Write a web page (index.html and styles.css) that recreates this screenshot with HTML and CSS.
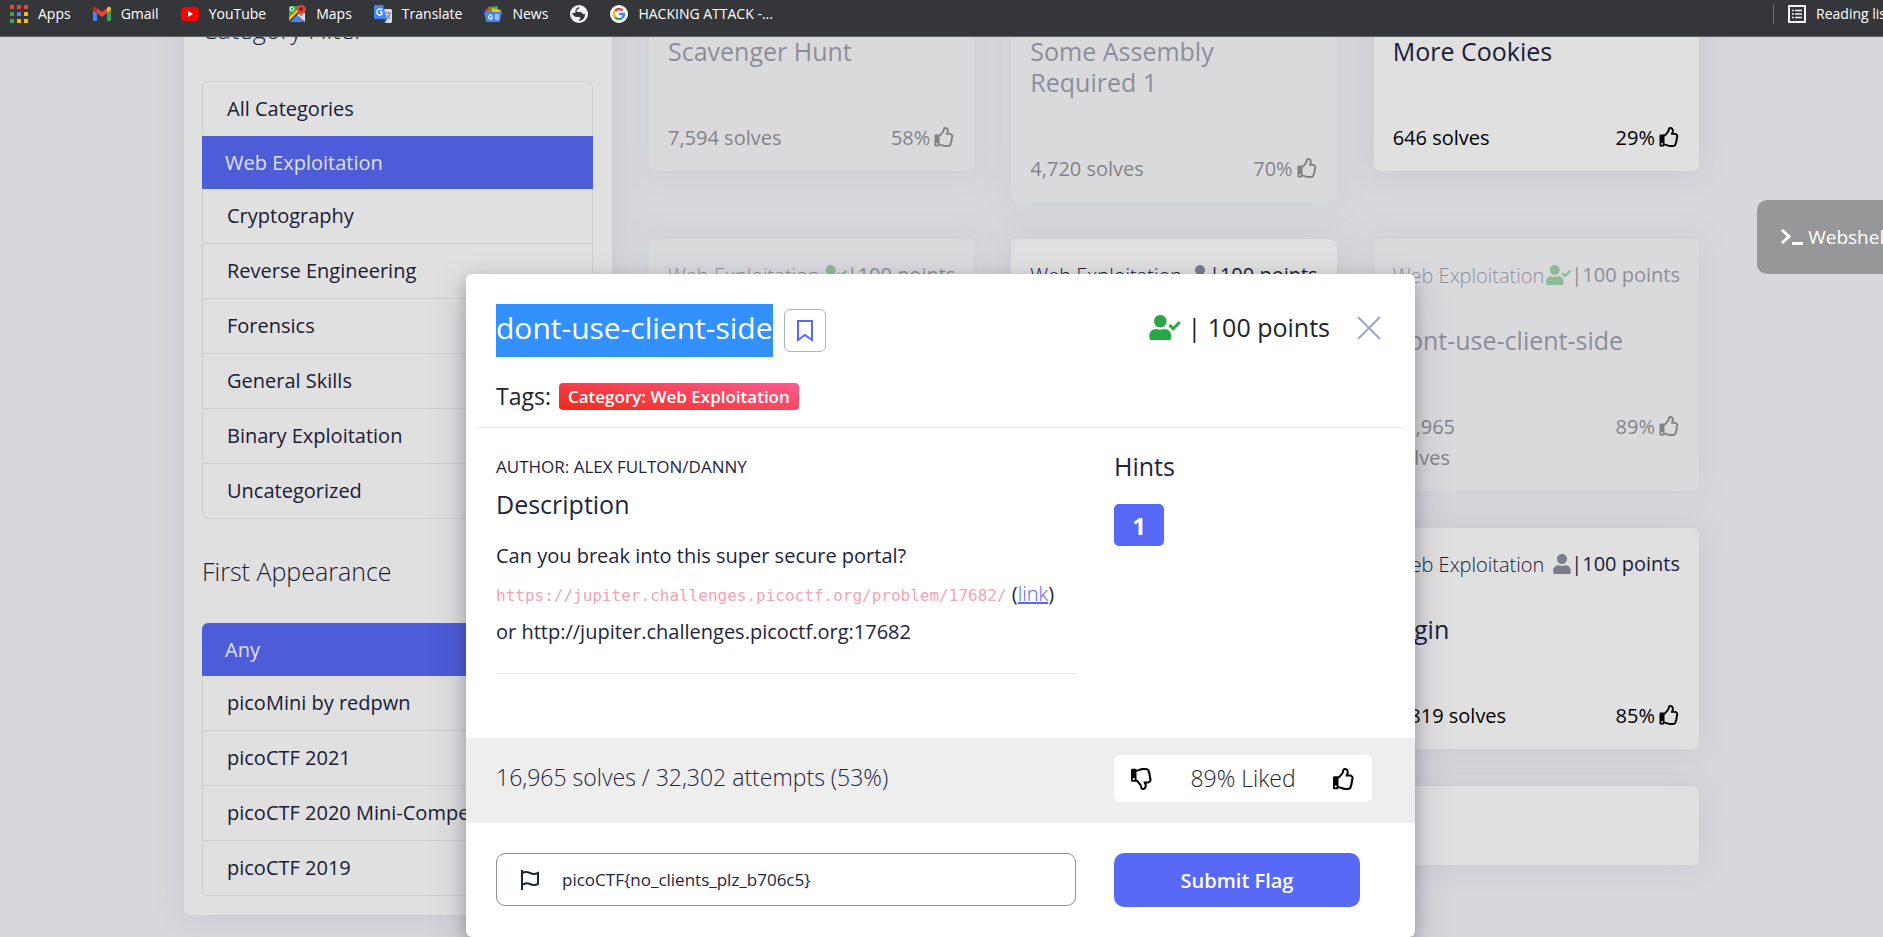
FILE: index.html
```html
<!DOCTYPE html>
<html lang="en">
<head>
<meta charset="utf-8">
<title>picoCTF - Practice</title>
<link rel="stylesheet" href="styles.css">
</head>
<body>
<svg class="sprite" aria-hidden="true">
  <symbol id="thumb" viewBox="0 0 512 512"><path d="M466.27 286.69C475.04 271.84 480 256 480 236.85c0-44.015-37.218-85.58-85.82-85.58H357.7c4.92-12.81 8.85-28.13 8.85-46.54C366.55 31.936 328.86 0 271.28 0c-61.607 0-58.093 94.933-71.76 108.6-22.747 22.747-49.615 66.447-68.76 83.4H32c-17.673 0-32 14.327-32 32v240c0 17.673 14.327 32 32 32h64c14.893 0 27.408-10.174 30.978-23.95 44.509 1.001 75.06 39.94 177.802 39.94 7.22 0 15.22.01 22.22.01 77.117 0 111.986-39.423 112.94-95.33 13.319-18.425 20.299-43.122 17.34-66.99 9.854-18.452 13.664-40.343 8.99-62.99zm-61.75 53.83c12.56 21.13 1.26 49.41-13.94 57.57 7.7 48.78-17.608 65.9-53.12 65.9h-37.82c-71.639 0-118.029-37.82-171.64-37.82V240h10.92c28.36 0 67.98-70.89 94.54-97.46 28.36-28.36 18.91-75.63 37.82-94.54 47.27 0 47.27 32.98 47.27 56.73 0 39.17-28.36 56.72-28.36 94.54h103.99c21.11 0 37.73 18.91 37.82 37.82.09 18.9-12.82 37.81-22.27 37.81 13.489 14.555 16.371 45.236-5.21 65.62zM88 432c0 13.255-10.745 24-24 24s-24-10.745-24-24 10.745-24 24-24 24 10.745 24 24z"/></symbol>
  <symbol id="thumb-down" viewBox="0 0 512 512"><path transform="matrix(1 0 0 -1 0 512)" d="M466.27 286.69C475.04 271.84 480 256 480 236.85c0-44.015-37.218-85.58-85.82-85.58H357.7c4.92-12.81 8.85-28.13 8.85-46.54C366.55 31.936 328.86 0 271.28 0c-61.607 0-58.093 94.933-71.76 108.6-22.747 22.747-49.615 66.447-68.76 83.4H32c-17.673 0-32 14.327-32 32v240c0 17.673 14.327 32 32 32h64c14.893 0 27.408-10.174 30.978-23.95 44.509 1.001 75.06 39.94 177.802 39.94 7.22 0 15.22.01 22.22.01 77.117 0 111.986-39.423 112.94-95.33 13.319-18.425 20.299-43.122 17.34-66.99 9.854-18.452 13.664-40.343 8.99-62.99zm-61.75 53.83c12.56 21.13 1.26 49.41-13.94 57.57 7.7 48.78-17.608 65.9-53.12 65.9h-37.82c-71.639 0-118.029-37.82-171.64-37.82V240h10.92c28.36 0 67.98-70.89 94.54-97.46 28.36-28.36 18.91-75.63 37.82-94.54 47.27 0 47.27 32.98 47.27 56.73 0 39.17-28.36 56.72-28.36 94.54h103.99c21.11 0 37.73 18.91 37.82 37.82.09 18.9-12.82 37.81-22.27 37.81 13.489 14.555 16.371 45.236-5.21 65.62zM88 256c0 13.255-10.745 24-24 24s-24-10.745-24-24 10.745-24 24-24 24 10.745 24 24z"/></symbol>
  <symbol id="user" viewBox="0 0 448 512"><path d="M224 256c70.7 0 128-57.3 128-128S294.7 0 224 0 96 57.3 96 128s57.3 128 128 128zm89.6 32h-16.7c-22.2 10.2-46.9 16-72.9 16s-50.6-5.8-72.9-16h-16.7C60.2 288 0 348.2 0 422.4V464c0 26.5 21.5 48 48 48h352c26.5 0 48-21.5 48-48v-41.6c0-74.2-60.2-134.4-134.4-134.4z"/></symbol>
  <symbol id="user-check" viewBox="0 0 640 512"><path d="M224 256c70.7 0 128-57.3 128-128S294.7 0 224 0 96 57.3 96 128s57.3 128 128 128zm89.6 32h-16.7c-22.2 10.2-46.9 16-72.9 16s-50.6-5.8-72.9-16h-16.7C60.2 288 0 348.2 0 422.4V464c0 26.5 21.5 48 48 48h352c26.5 0 48-21.5 48-48v-41.6c0-74.2-60.2-134.4-134.4-134.4zm323-128.4l-27.8-28.1c-4.6-4.7-12.1-4.7-16.8-.1l-104.8 104-45.5-45.8c-4.6-4.7-12.1-4.7-16.8-.1l-28.1 27.9c-4.7 4.6-4.7 12.1-.1 16.8l81.7 82.3c4.6 4.7 12.1 4.7 16.8.1l141.3-140.2c4.6-4.7 4.7-12.2.1-16.8z"/></symbol>
</svg>

<header class="bookmarks">
  <a class="bookmark" href="#"><svg viewBox="0 0 18 18"><path fill="#ea4335" d="M0 0h4v4H0zM7 0h4v4H7zM14 0h4v4h-4z"/><path fill="#34a853" d="M0 7h4v4H0z"/><path fill="#4285f4" d="M7 7h4v4H7z"/><path fill="#fbbc04" d="M14 7h4v4h-4zM7 14h4v4H7zM14 14h4v4h-4z"/><path fill="#34a853" d="M0 14h4v4H0z"/></svg>Apps</a>
  <a class="bookmark" href="#"><svg viewBox="0 0 18 18"><path fill="#4285f4" d="M0 5l4 3v8H1q-1 0-1-1z"/><path fill="#34a853" d="M14 8l4-3v10q0 1-1 1h-3z"/><path fill="#ea4335" d="M4 3l5 4 5-4v5l-5 4-5-4z"/><path fill="#c5221f" d="M0 4q0-3 3-2l1 1v5L0 5z"/><path fill="#fbbc04" d="M18 4q0-3-3-2l-1 1v5l4-3z"/></svg>Gmail</a>
  <a class="bookmark" href="#"><svg viewBox="0 0 18 18"><rect y="2" width="18" height="14" rx="4" fill="#f00"/><path fill="#fff" d="M7 6l5 3-5 3z"/></svg>YouTube</a>
  <a class="bookmark" href="#"><svg viewBox="0 0 18 18"><path fill="#34a853" d="M1 1h10L1 12z"/><path fill="#fbbc04" d="M1 12L12 1l2 2L1 16z"/><path fill="#4285f4" d="M2 17l7-7 7 7z"/><path fill="#dadce0" d="M9 10l5-4 3 2v9z"/><path fill="#ea4335" d="M13 0c3 0 5 2 5 4 0 3-4 4-5 8-1-4-4-5-4-8 0-2 1-4 4-4z"/><circle cx="13" cy="4" r="2" fill="#8c1d18"/><circle cx="4" cy="4" r="2" fill="none" stroke="#fff"/></svg>Maps</a>
  <a class="bookmark" href="#"><svg viewBox="0 0 18 18"><path fill="#dadce0" d="M8 4h9l1 1v12l-1 1h-6z"/><path fill="#4285f4" d="M1 0h8l4 14H1l-1-1V1z"/><path fill="#1a56c4" d="M9 14h4l-2 4z"/><path fill="none" stroke="#fff" stroke-width="1.3" d="M8 5a3 3 0 1 0 0 4V7H6"/><path fill="none" stroke="#607d8b" d="M12 8h5M14 7v1m2 0q-1 4-3 6m0-4l3 4"/></svg>Translate</a>
  <a class="bookmark" href="#"><svg viewBox="0 0 18 18"><path fill="#34a853" d="M4 2l10-1v6H4z"/><path fill="#ea4335" d="M1 5l4-2v5H2z"/><path fill="#fbbc04" d="M8 3l9 2-1 4H8z"/><path fill="#4285f4" d="M0 7h18l-2 9q0 1-1 1H3q-1 0-1-1z"/><path fill="none" stroke="#fff" stroke-width="1.2" d="M8 10.500a2 2 0 1 0 0 3V12H7M11 10h4m-4 2h4m-4 2h4"/></svg>News</a>
  <a class="bookmark" href="#" aria-label="Website"><svg viewBox="0 0 18 18"><circle cx="9" cy="9" r="9" fill="#f1f3f4"/><path fill="#35363a" d="M9 2c1 1 0 2-1 2-1 1-2 1-1 3h3c2 0 2 1 3 2l2 0c0 4-2 6-6 7 0-2 2-2 1-4H7C4 12 3 10 2 8h3c1-1 0-3 1-4 1-1 2-2 3-2z"/></svg></a>
  <a class="bookmark" href="#"><svg viewBox="0 0 18 18"><circle cx="9" cy="9" r="9" fill="#fff"/><g fill="none" stroke-width="2.500"><path stroke="#ea4335" d="M5 6a5 5 0 0 1 7.500-.500"/><path stroke="#fbbc04" d="M5 6a5 5 0 0 0 0 6"/><path stroke="#34a853" d="M5 12a5 5 0 0 0 7 1"/><path stroke="#4285f4" d="M12 13a5 5 0 0 0 2-4H9"/></g></svg>HACKING ATTACK -...</a>
  <a class="bookmark reading" href="#"><svg viewBox="0 0 18 18"><path fill="none" stroke="#f1f3f4" stroke-width="2" d="M1 1h16v16H1z"/><path stroke="#f1f3f4" stroke-width="1.500" d="M4 5.500h2m1 0h7M4 9h2m1 0h7M4 12.500h2m1 0h7"/></svg>Reading list</a>
</header>

<main class="viewport">
  <div class="page">
    <aside class="sidebar">
      <h2 class="filter-title">Category Filter</h2>
      <nav class="filter-list">
        <a href="#">All Categories</a>
        <a href="#" class="active">Web Exploitation</a>
        <a href="#">Cryptography</a>
        <a href="#">Reverse Engineering</a>
        <a href="#">Forensics</a>
        <a href="#">General Skills</a>
        <a href="#">Binary Exploitation</a>
        <a href="#">Uncategorized</a>
      </nav>
      <h2 class="filter-title">First Appearance</h2>
      <nav class="filter-list">
        <a href="#" class="active">Any</a>
        <a href="#">picoMini by redpwn</a>
        <a href="#">picoCTF 2021</a>
        <a href="#">picoCTF 2020 Mini-Competition</a>
        <a href="#">picoCTF 2019</a>
      </nav>
    </aside>

    <section class="cards">
      <article class="card solved">
        <div class="card-head"><span class="category">Web Exploitation</span><svg class="who-check"><use href="#user-check"/></svg><span>|100 points</span></div>
        <h3>Scavenger Hunt</h3>
        <div class="card-foot"><span>7,594 solves</span><span class="rating">58%<svg><use href="#thumb"/></svg></span></div>
      </article>
      <article class="card solved">
        <div class="card-head"><span class="category">Web Exploitation</span><svg class="who-check"><use href="#user-check"/></svg><span>|100 points</span></div>
        <h3>Some Assembly Required 1</h3>
        <div class="card-foot"><span>4,720 solves</span><span class="rating">70%<svg><use href="#thumb"/></svg></span></div>
      </article>
      <article class="card">
        <div class="card-head"><span class="category">Web Exploitation</span><svg class="who"><use href="#user"/></svg><span>|100 points</span></div>
        <h3>More Cookies</h3>
        <div class="card-foot"><span>646 solves</span><span class="rating">29%<svg><use href="#thumb"/></svg></span></div>
      </article>
      <article class="card solved">
        <div class="card-head"><span class="category">Web Exploitation</span><svg class="who-check"><use href="#user-check"/></svg><span>|100 points</span></div>
      </article>
      <article class="card">
        <div class="card-head"><span class="category">Web Exploitation</span><svg class="who"><use href="#user"/></svg><span>|100 points</span></div>
      </article>
      <article class="card solved">
        <div class="card-head"><span class="category">Web Exploitation</span><svg class="who-check"><use href="#user-check"/></svg><span>|100 points</span></div>
        <h3>dont-use-client-side</h3>
        <div class="card-foot"><span>16,965<br>solves</span><span class="rating">89%<svg><use href="#thumb"/></svg></span></div>
      </article>
      <article class="card last-column">
        <div class="card-head"><span class="category">Web Exploitation</span><svg class="who"><use href="#user"/></svg><span>|100 points</span></div>
        <h3>login</h3>
        <div class="card-foot"><span>4,819 solves</span><span class="rating">85%<svg><use href="#thumb"/></svg></span></div>
      </article>
      <article class="card pager"></article>
    </section>
  </div>

  <div class="overlay">
    <section class="modal" role="dialog" aria-labelledby="challenge-name">
      <div class="modal-head">
        <h1 id="challenge-name"><span class="selected">dont-use-client-side</span></h1>
        <button class="bookmark-button" aria-label="Bookmark"><svg viewBox="0 0 18 24"><path d="M2 2h14v19l-7-5-7 5z"/></svg></button>
        <div class="points"><svg><use href="#user-check"/></svg><span>| 100 points</span></div>
        <button class="close-button" aria-label="Close"><svg viewBox="0 0 24 24"><path d="M1 1l22 22M23 1L1 23"/></svg></button>
      </div>
      <div class="tags"><span>Tags:</span><span class="tag">Category: Web Exploitation</span></div>
      <div class="modal-body">
        <div class="description">
          <p class="author">AUTHOR: ALEX FULTON/DANNY</p>
          <h2>Description</h2>
          <p>Can you break into this super secure portal?<br><code>https://jupiter.challenges.picoctf.org/problem/17682/</code> (<a href="#">link</a>)<br>or http://jupiter.challenges.picoctf.org:17682</p>
        </div>
        <div class="hints">
          <h2>Hints</h2>
          <button class="hint-button">1</button>
        </div>
      </div>
      <div class="stats">
        <span class="attempts">16,965 solves / 32,302 attempts (53%)</span>
        <div class="liked">
          <button aria-label="Dislike"><svg><use href="#thumb-down"/></svg></button>
          <span>89% Liked</span>
          <button aria-label="Like"><svg><use href="#thumb"/></svg></button>
        </div>
      </div>
      <form class="submit-row">
        <label class="flag-field">
          <svg viewBox="0 0 20 20"><path d="M2 0v20M2 3q4-2 8 0t8 0v11q-4 2-8 0t-8 1"/></svg>
          <input type="text" aria-label="Flag" value="picoCTF{no_clients_plz_b706c5}">
        </label>
        <button class="submit-button" type="button">Submit Flag</button>
      </form>
    </section>
  </div>

  <button class="webshell"><svg viewBox="0 0 24 18"><path d="M2 2l7 6.500L2 15M12 15.500h11"/></svg>Webshell</button>
</main>
</body>
</html>
```

FILE: styles.css
```css
* { box-sizing: border-box; }

body {
  margin: 0;
  height: 100vh;
  display: flex;
  flex-direction: column;
  overflow: hidden;
  background: #f5f6fa;
  color: #1d2440;
  font-family: "Open Sans", "Noto Sans", sans-serif;
  font-size: 20px;
  line-height: 31px;
}

h1, h2, h3, p { margin: 0; font-weight: 400; }
button, input { font: inherit; color: inherit; }
button { padding: 0; border: 0; background: none; cursor: pointer; }
svg { flex: none; fill: currentColor; }
.sprite { position: absolute; width: 0; height: 0; }

/* Bookmarks bar */
.bookmarks {
  flex: none;
  display: flex;
  align-items: center;
  gap: 22px;
  height: 37px;
  padding: 0 0 9px 10px;
  overflow: hidden;
  background: #35363a;
  border-bottom: 1px solid #5f6064;
  font-size: 14px;
  line-height: 20px;
}
.bookmark {
  flex: none;
  display: flex;
  align-items: center;
  gap: 10px;
  color: #fff;
  text-decoration: none;
  white-space: nowrap;
}
.bookmark svg { width: 18px; height: 18px; }
.reading {
  margin-left: auto;
  margin-right: -8px;
  padding-left: 14px;
  border-left: 1px solid #6b6c70;
}

/* Page behind the dialog */
.viewport { position: relative; flex: 1; min-height: 0; overflow: hidden; }
.page {
  display: flex;
  align-items: flex-start;
  gap: 37px;
  max-width: 1515px;
  margin: -87px auto 0;
}
.sidebar, .card {
  background: #fff;
  border-radius: 6px;
  box-shadow: 0 0 32px rgba(110, 110, 150, .13);
}
.sidebar { width: 428px; padding: 27px 19px 19px 18px; }
.filter-title {
  padding: 37px 0 36px;
  font-size: 25px;
  font-weight: 300;
}
.filter-list { display: flex; flex-direction: column; }
.filter-list a {
  display: block;
  padding: 11px 24px 12px;
  border: 1px solid #e9ecef;
  border-top-width: 0;
  color: #1d2440;
  text-decoration: none;
  white-space: nowrap;
  overflow: hidden;
}
.filter-list a:first-child { border-radius: 6px 6px 0 0; border-top-width: 1px; border-bottom-width: 0; }
.filter-list a:last-child { border-radius: 0 0 6px 6px; }
.filter-list a.active {
  padding: 11px 23px;
  border: 0;
  background: #5869f7;
  color: #fff;
}

.cards {
  flex: 1;
  display: grid;
  grid-template-columns: repeat(3, 1fr);
  align-items: start;
  gap: 37px;
}
.card { min-width: 0; padding: 20px 19px 18px; }
.solved { opacity: .4; }
.card-head { display: flex; align-items: center; white-space: nowrap; }
.category { flex: 1; padding-top: 3px; font-weight: 300; line-height: 28px; }
.who, .who-check { height: 20px; margin-left: 2px; color: #8a8fa0; }
.who { width: 18px; }
.who-check { width: 25px; color: #28a745; }
.card h3 { padding: 35px 0 55px; font-size: 25px; }
.card-foot { display: flex; justify-content: space-between; align-items: flex-start; color: #000; }
.rating { display: flex; align-items: center; gap: 4px; }
.rating svg { width: 21px; height: 20px; margin-bottom: 2px; }
.last-column { grid-column: 3; }
.pager { grid-column: 1 / -1; height: 79px; }

/* Challenge dialog */
.overlay {
  position: absolute;
  inset: 0;
  padding: 237px 2px 0 0;
  background: rgba(0, 0, 0, .12);
}
.modal {
  max-width: 949px;
  margin: 0 auto;
  background: #fff;
  border-radius: 6px;
  box-shadow: 0 15px 35px rgba(50, 50, 93, .25), 0 5px 15px rgba(0, 0, 0, .2);
}
.modal-head { display: flex; align-items: center; padding: 30px 34px 0 30px; color: #212529; }
.modal-head h1 { font-size: 30px; line-height: 47px; color: #fff; }
.selected { display: block; padding-bottom: 6px; background: #3390ff; }
.bookmark-button {
  width: 42px;
  height: 43px;
  margin-left: 11px;
  display: grid;
  place-items: center;
  border: 1px solid #adb5bd;
  border-radius: 6px;
}
.bookmark-button svg { width: 18px; height: 24px; fill: none; stroke: #5869f7; stroke-width: 2; }
.points { display: flex; align-items: center; gap: 7px; margin-left: auto; padding-bottom: 6px; font-size: 25px; }
.points svg { width: 32px; height: 25px; color: #28a745; }
.close-button { display: grid; margin-left: 27px; padding-bottom: 6px; }
.close-button svg { width: 24px; height: 24px; fill: none; stroke: #9aa5c8; stroke-width: 2; }
.tags {
  display: flex;
  align-items: center;
  gap: 8px;
  margin: 0 10px;
  padding: 24px 20px 15px;
  border-bottom: 1px solid #eee;
  color: #212529;
  font-size: 23px;
}
.tag {
  padding: 0 9px;
  border-radius: 4px;
  background: linear-gradient(10deg, #ef2a17, #ff5b90);
  color: #fff;
  font-size: 17px;
  font-weight: 600;
  line-height: 27px;
}
.modal-body, .stats, .submit-row {
  display: grid;
  grid-template-columns: 580px 1fr;
  column-gap: 38px;
  padding-left: 30px;
}
.modal-body { padding-top: 23px; padding-bottom: 64px; }
.description { padding-bottom: 22px; border-bottom: 1px solid #e6e6e6; line-height: 38px; }
.author { font-size: 17px; line-height: 31px; }
.modal-body h2 { font-size: 25px; line-height: 31px; }
.description h2 { padding: 7px 0 17px; }
code { color: #f3a4b5; font-family: "DejaVu Sans Mono", monospace; font-size: 16px; line-height: 16px; }
.description a { color: #5869f7; font-weight: 300; }
.hint-button {
  width: 50px;
  height: 42px;
  margin-top: 22px;
  border-radius: 5px;
  background: #5869f7;
  color: #fff;
  font-size: 24px;
  font-weight: 700;
}
.stats { align-items: center; height: 85px; padding-bottom: 4px; background: #eee; font-size: 23px; font-weight: 300; }
.attempts { padding-bottom: 2px; }
.liked {
  display: flex;
  justify-content: space-between;
  align-items: center;
  width: 258px;
  height: 47px;
  padding: 0 17px;
  border-radius: 6px;
  background: #fff;
  color: #212529;
}
.liked button { display: grid; color: #000; }
.liked svg { width: 22px; height: 22px; }
.submit-row { align-items: start; padding-top: 30px; padding-bottom: 30px; }
.flag-field {
  display: flex;
  align-items: center;
  gap: 22px;
  height: 53px;
  padding: 0 23px;
  border: 1px solid #8b8fa0;
  border-radius: 9px;
}
.flag-field svg { width: 20px; height: 20px; fill: none; stroke: #1d2440; stroke-width: 2; }
.flag-field input { flex: 1; min-width: 0; padding: 0; border: 0; outline: 0; font-size: 17px; }
.submit-button {
  width: 246px;
  height: 54px;
  border-radius: 10px;
  background: #5869f7;
  color: #fff;
  font-weight: 600;
}

.webshell {
  position: absolute;
  top: 163px;
  right: -22px;
  display: flex;
  align-items: center;
  gap: 4px;
  height: 74px;
  padding: 0 16px 0 23px;
  border-radius: 10px 0 0 10px;
  background: #969798;
  color: #fff;
  font-size: 19px;
}
.webshell svg { width: 24px; height: 18px; fill: none; stroke: #fff; stroke-width: 3; }
```
